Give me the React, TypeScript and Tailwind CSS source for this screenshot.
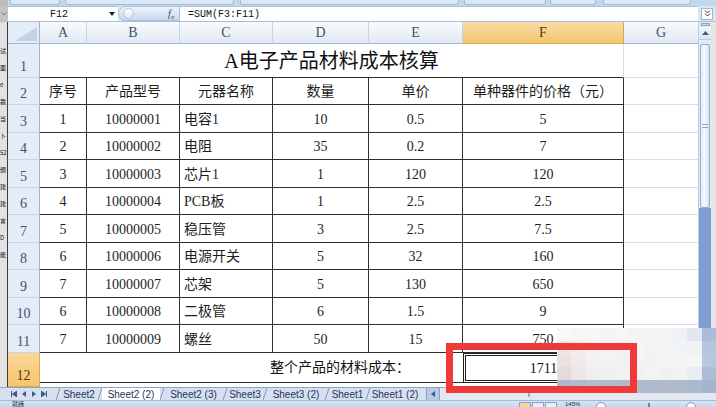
import React from 'react'

const COL_W = ['w-[47px]', 'w-[93px]', 'w-[93px]', 'w-[96px]', 'w-[94px]', 'w-[161px]']
const LETTERS = ['A', 'B', 'C', 'D', 'E', 'F']
const HEAD = ['序号', '产品型号', '元器名称', '数量', '单价', '单种器件的价格（元）']
const DATA = [
  ['1', '10000001', '电容1', '10', '0.5', '5'],
  ['2', '10000002', '电阻', '35', '0.2', '7'],
  ['3', '10000003', '芯片1', '1', '120', '120'],
  ['4', '10000004', 'PCB板', '1', '2.5', '2.5'],
  ['5', '10000005', '稳压管', '3', '2.5', '7.5'],
  ['6', '10000006', '电源开关', '5', '32', '160'],
  ['7', '10000007', '芯架', '5', '130', '650'],
  ['6', '10000008', '二极管', '6', '1.5', '9'],
  ['7', '10000009', '螺丝', '50', '15', '750'],
]
// rows 2..11
const ROW_H = ['h-[27px]', 'h-[28px]', 'h-[27px]', 'h-[28px]', 'h-[27px]', 'h-[28px]', 'h-[27px]', 'h-[28px]', 'h-[27px]', 'h-[28px]']
const LEFT_GLYPHS = ['试', '面', 'e', '裁', '当', '卜', '52', '颁', '建', '建', '言', 'D', '能']
const MOSAIC = [
  'bg-[#f8f8f8]', 'bg-[#f6f6f6]', 'bg-[#f7f7f7]', 'bg-[#f5f5f5]', 'bg-[#f6f6f6]', 'bg-[#f4f4f4]', 'bg-[#f5f5f5]', 'bg-[#f3f3f3]', 'bg-[#eef1f5]', 'bg-[#e2e8f1]', 'bg-[#a9bcd9]',
  'bg-[#f1e6e6]', 'bg-[#f3ecec]', 'bg-[#f5f2f2]', 'bg-[#f4f4f4]', 'bg-[#f2f2f2]', 'bg-[#f5f5f5]', 'bg-[#f3f3f3]', 'bg-[#f4f4f4]', 'bg-[#f2f3f6]', 'bg-[#f0f2f5]', 'bg-[#b6c5df]',
  'bg-[#ece2e2]', 'bg-[#f1eaea]', 'bg-[#f3f1f1]', 'bg-[#f3f3f3]', 'bg-[#f1f1f1]', 'bg-[#f4f4f4]', 'bg-[#f2f2f2]', 'bg-[#f5f5f5]', 'bg-[#f3f3f3]', 'bg-[#f4f5f7]', 'bg-[#b8c6de]',
  'bg-[#e6dbdb]', 'bg-[#ede6e6]', 'bg-[#f1eeee]', 'bg-[#f0f0f0]', 'bg-[#f2f2f2]', 'bg-[#f1f1f1]', 'bg-[#f3f3f3]', 'bg-[#f0f0f0]', 'bg-[#f2f2f2]', 'bg-[#e9edf3]', 'bg-[#adbdd8]',
  'bg-[#aeb8cb]', 'bg-[#b0bacc]', 'bg-[#b2bccd]', 'bg-[#afbacc]', 'bg-[#b1bbcd]', 'bg-[#afbacc]', 'bg-[#adb9cc]', 'bg-[#b0bacc]', 'bg-[#aeb9cc]', 'bg-[#abb8ce]', 'bg-[#a4b4cf]',
]
const TABS = [
  { label: 'Sheet2', w: 'w-[38px]' },
  { label: 'Sheet2 (2)', w: 'w-[58px]', active: true },
  { label: 'Sheet2 (3)', w: 'w-[59px]' },
  { label: 'Sheet3', w: 'w-[36px]' },
  { label: 'Sheet3 (2)', w: 'w-[58px]' },
  { label: 'Sheet1', w: 'w-[37px]' },
  { label: 'Sheet1 (2)', w: 'w-[50px]' },
]

const RowHead = ({ n, h, active }: { n: number; h: string; active?: boolean }) => (
  <div
    className={`${h} w-[32px] shrink-0 flex items-end justify-center pb-[3px] border-r border-b text-[14px] leading-[14px] ${
      active
        ? 'bg-linear-to-b from-[#fbd89a] to-[#f6c56b] border-[#d9a94e] text-[#4a3a1a]'
        : 'bg-[#e4ecf7] border-r-[#9eb6ce] border-b-[#c6d4e6] text-[#3d5373]'
    }`}
  >
    {n}
  </div>
)

function Ribbon() {
  return (
    <div className="flex h-[6px] bg-[#c3d7ef]">
      <div className="w-[8px] bg-[#bdbdbd]" />
      <div className="ml-[2px] w-[50px] h-[5px] rounded-b-[3px] border border-t-0 border-[#9fbbdc] bg-[#dde8f5]" />
      <div className="ml-[5px] w-[169px] h-[5px] rounded-b-[3px] border border-t-0 border-[#9fbbdc] bg-[#dde8f5]" />
      <div className="ml-[6px] w-[219px] h-[5px] rounded-b-[3px] border border-t-0 border-[#9fbbdc] bg-[#dde8f5]" />
      <div className="ml-[5px] w-[82px] h-[5px] rounded-b-[3px] border border-t-0 border-[#9fbbdc] bg-[#dde8f5]" />
      <div className="ml-[4px] w-[46px] h-[5px] rounded-b-[3px] border border-t-0 border-[#9fbbdc] bg-[#dde8f5]" />
      <div className="ml-[7px] w-[88px] h-[5px] rounded-b-[3px] border border-t-0 border-[#9fbbdc] bg-[#dde8f5]" />
    </div>
  )
}

function FormulaBar() {
  return (
    <div className="flex h-[16px] bg-[#dbe6f4] border-b border-[#a9bedb] font-['Liberation_Mono',monospace] text-[10px] text-[#111]">
      <div className="w-[8px] bg-[#c4c4c4] flex items-center justify-center">
        <svg width="6" height="4" viewBox="0 0 6 4"><path d="M0.5 0.5 L3 3 L5.5 0.5" fill="none" stroke="#777" /></svg>
      </div>
      <div className="w-[110px] bg-white border-t border-[#a9bedb] flex items-center pl-[42px] pr-[3px]">
        <span>F12</span>
        <svg className="ml-auto" width="6" height="4" viewBox="0 0 6 4"><path d="M0 0 H6 L3 4 Z" fill="#222" /></svg>
      </div>
      <div className="w-[62px] flex items-center bg-linear-to-b from-[#eef3fa] to-[#c9d9ee] rounded-l-[8px] border border-[#a9bedb]">
        <div className="ml-[4px] w-[11px] h-[11px] rounded-full border border-[#b4c3d6] bg-linear-to-b from-[#ffffff] to-[#dde6f1]" />
        <span className="ml-auto mr-[5px] font-['Liberation_Serif',serif] italic text-[10px] text-[#444]">f<sub className="text-[7px]">x</sub></span>
      </div>
      <div className="flex-1 bg-white border-t border-[#a9bedb] flex items-center pl-[8px]">=SUM(F3:F11)</div>
      <div className="w-[18px] flex items-center justify-center">
        <div className="w-[12px] h-[12px] bg-white border border-[#9fb6d4] flex items-center justify-center">
          <svg width="7" height="7" viewBox="0 0 7 7"><path d="M1 0.5 L3.5 3 L6 0.5 M1 3.5 L3.5 6 L6 3.5" fill="none" stroke="#333" /></svg>
        </div>
      </div>
    </div>
  )
}

function LeftStrip() {
  return (
    <div className="w-[8px] shrink-0 bg-[#e2e2e2] border-r border-[#3c3c3c] overflow-hidden flex flex-col pt-[20px] font-['Noto_Sans_CJK_SC',sans-serif] text-[6px] leading-[17px] text-[#111]">
      {LEFT_GLYPHS.map((g, i) => (
        <div key={i} className="whitespace-nowrap">{g}</div>
      ))}
    </div>
  )
}

function Sheet() {
  const cellBase = 'flex items-end pb-[5px] border-r border-b border-[#2e2e2e] text-[14px] leading-[14px]'
  return (
    <div className="w-[690px] flex flex-col">
      {/* column header */}
      <div className="flex h-[22px]">
        <div className="w-[32px] bg-[#e4ecf7] border-r border-b border-[#9eb6ce] flex items-end justify-end p-[2px]">
          <svg width="22" height="14" viewBox="0 0 22 14"><path d="M22 0 V14 H0 Z" fill="#c2d1e4" /></svg>
        </div>
        {LETTERS.map((l, j) => (
          <div
            key={l}
            className={`${COL_W[j]} flex items-center justify-center border-r border-b text-[14px] ${
              l === 'F'
                ? 'bg-linear-to-b from-[#fbdca6] to-[#f3c56e] border-[#d9a94e] text-[#4a3a1a]'
                : 'bg-linear-to-b from-[#f9fbfd] to-[#e1e9f4] border-r-[#c5d3e4] border-b-[#9eb6ce] text-[#3d5373]'
            }`}
          >
            {l}
          </div>
        ))}
        <div className="w-[74px] flex items-center justify-center bg-linear-to-b from-[#f9fbfd] to-[#e1e9f4] border-b border-[#9eb6ce] text-[14px] text-[#3d5373]">G</div>
      </div>

      {/* row 1: title */}
      <div className="flex h-[34px]">
        <RowHead n={1} h="h-[34px]" />
        <div className="w-[584px] flex items-end justify-center pb-[6px] border-b border-b-[#2e2e2e] border-r border-r-[#dadfe7] text-[20px] leading-[20px] text-[#111]">
          A电子产品材料成本核算
        </div>
        <div className="w-[74px] border-b border-[#dadfe7]" />
      </div>

      {/* row 2: headers */}
      <div className={`flex ${ROW_H[0]}`}>
        <RowHead n={2} h={ROW_H[0]} />
        {HEAD.map((t, j) => (
          <div key={t} className={`${COL_W[j]} ${cellBase} justify-center`}>{t}</div>
        ))}
        <div className="w-[74px] border-b border-[#dadfe7]" />
      </div>

      {/* rows 3-11 */}
      {DATA.map((r, i) => (
        <div key={i} className={`flex ${ROW_H[i + 1]}`}>
          <RowHead n={i + 3} h={ROW_H[i + 1]} />
          {r.map((v, j) => (
            <div key={j} className={`${COL_W[j]} ${cellBase} ${j === 2 ? 'justify-start pl-[4px]' : 'justify-center'}`}>{v}</div>
          ))}
          <div className="w-[74px] border-b border-[#dadfe7]" />
        </div>
      ))}

      {/* row 12: total */}
      <div className="flex h-[34px]">
        <RowHead n={12} h="h-[34px]" active />
        <div className="flex flex-col">
          <div className="flex h-[30px]">
            <div className="w-[423px] flex items-center pl-[230px] border-b border-[#2e2e2e] text-[14px] text-[#111]">整个产品的材料成本：</div>
            <div className="w-[161px] flex items-center justify-center border-[3px] border-double border-[#222] text-[14px] text-[#111]">1711</div>
            <div className="w-[74px] border-b border-[#dadfe7]" />
          </div>
        </div>
      </div>
    </div>
  )
}

function VScroll() {
  return (
    <div className="w-[18px] flex">
      <div className="w-[13px] flex flex-col bg-[#e3ebf5] border-l border-[#b9cbe2]">
        <div className="h-[5px] flex items-center justify-center">
          <div className="w-[9px] h-[3px] bg-[#c9d6e8] border border-[#8ea6c6]" />
        </div>
        <div className="h-[13px] flex items-center justify-center bg-linear-to-b from-[#f4f7fc] to-[#d9e4f3] border-b border-[#b9cbe2]">
          <svg width="7" height="4" viewBox="0 0 7 4"><path d="M0 4 L3.5 0 L7 4 Z" fill="#3d5a86" /></svg>
        </div>
        <div className="h-[4px]" />
        <div className="h-[164px] mx-[1px] rounded-[2px] border border-[#94adcf] bg-linear-to-r from-[#e8eef8] via-[#f6f9fd] to-[#d5e0f0] flex items-center justify-center">
          <div className="w-[6px] h-[4px] border-y border-[#8ea6c6]" />
        </div>
        <div className="flex-1 bg-[#7f9fd2]" />
      </div>
      <div className="w-[5px] bg-[#e6e6e6]" />
    </div>
  )
}

function TabBar() {
  return (
    <div className="flex h-[13px] bg-[#d6e0ee] border-t border-[#8ca4c6] font-['Liberation_Sans',sans-serif] text-[10px] text-[#1f3560]">
      <div className="w-[56px] flex items-center gap-[4px] pl-[11px]">
        <svg width="6" height="6" viewBox="0 0 6 6"><path d="M0.5 0 V6 M6 0 L1.5 3 L6 6 Z" stroke="#3d5a86" fill="#3d5a86" strokeWidth="1" /></svg>
        <svg width="6" height="6" viewBox="0 0 6 6"><path d="M5 0 L1 3 L5 6 Z" fill="#3d5a86" /></svg>
        <svg width="6" height="6" viewBox="0 0 6 6"><path d="M1 0 L5 3 L1 6 Z" fill="#3d5a86" /></svg>
        <svg width="6" height="6" viewBox="0 0 6 6"><path d="M5.5 0 V6 M0 0 L4.5 3 L0 6 Z" stroke="#3d5a86" fill="#3d5a86" strokeWidth="1" /></svg>
      </div>
      <div className="w-[370px] flex overflow-hidden">
        {TABS.map(t => (
          <React.Fragment key={t.label}>
            <svg className="shrink-0" width="4" height="12" viewBox="0 0 4 12"><path d="M0 12 L4 0" stroke="#7f97ba" strokeWidth="1" /></svg>
            <div className={`${t.w} shrink-0 flex items-center justify-center whitespace-nowrap ${t.active ? 'bg-white' : ''}`}>{t.label}</div>
          </React.Fragment>
        ))}
      </div>
      <div className="w-[14px] flex items-center justify-center bg-[#b9cbe4] border-x border-[#8ca4c6]">
        <svg width="4" height="6" viewBox="0 0 4 6"><path d="M4 0 L0 3 L4 6 Z" fill="#3d5a86" /></svg>
      </div>
      <div className="flex-1 bg-[#e3e9f1] flex items-center">
        <div className="ml-[88px] w-[2px] h-[6px] bg-[#a0b0c6]" />
      </div>
    </div>
  )
}

function StatusBar() {
  return (
    <div className="flex h-[7px] overflow-hidden bg-linear-to-b from-[#d9e5f5] to-[#c5d7ee] border-t border-[#a3bcdb] font-['Noto_Sans_CJK_SC',sans-serif] text-[6px] leading-[6px] text-[#1d2b40]">
      <div className="ml-[12px]">就绪</div>
      <div className="ml-[495px] flex gap-[1px] pt-[1px]">
        <div className="w-[12px] h-[10px] border border-[#8ca4c6] bg-[#f4d79a]" />
        <div className="w-[12px] h-[10px] border border-[#8ca4c6] bg-[#e6eef8]" />
        <div className="w-[12px] h-[10px] border border-[#8ca4c6] bg-[#e6eef8]" />
      </div>
      <div className="ml-[8px] w-[23px] font-['Liberation_Sans',sans-serif] text-[6px]">145%</div>
      <div className="ml-[8px] mt-[1px] w-[10px] h-[10px] rounded-full border border-[#7f97ba] bg-white" />
      <div className="w-[80px] relative">
        <div className="absolute left-[42px] top-[2px] w-[2px] h-[6px] bg-[#6c84a8]" />
      </div>
      <div className="mt-[1px] w-[10px] h-[10px] rounded-full border border-[#7f97ba] bg-white" />
    </div>
  )
}

export default function App() {
  return (
    <div className="relative w-[716px] h-[407px] overflow-hidden bg-white font-['Liberation_Serif','Noto_Sans_CJK_SC',serif] text-[#1e1e1e]">
      <Ribbon />
      <FormulaBar />
      <div className="flex h-[365px]">
        <LeftStrip />
        <Sheet />
        <VScroll />
      </div>
      <TabBar />
      <StatusBar />

      {/* pixelated blur over the corner */}
      <div className="absolute left-[557px] top-[328px] w-[159px] h-[65px] grid grid-cols-11 grid-rows-5">
        {MOSAIC.map((c, i) => (
          <div key={i} className={c} />
        ))}
      </div>

      {/* red highlight box */}
      <div className="absolute left-[446px] top-[343px] w-[191px] h-[50px] border-[7px] border-[#f03a3a]" />
    </div>
  )
}
